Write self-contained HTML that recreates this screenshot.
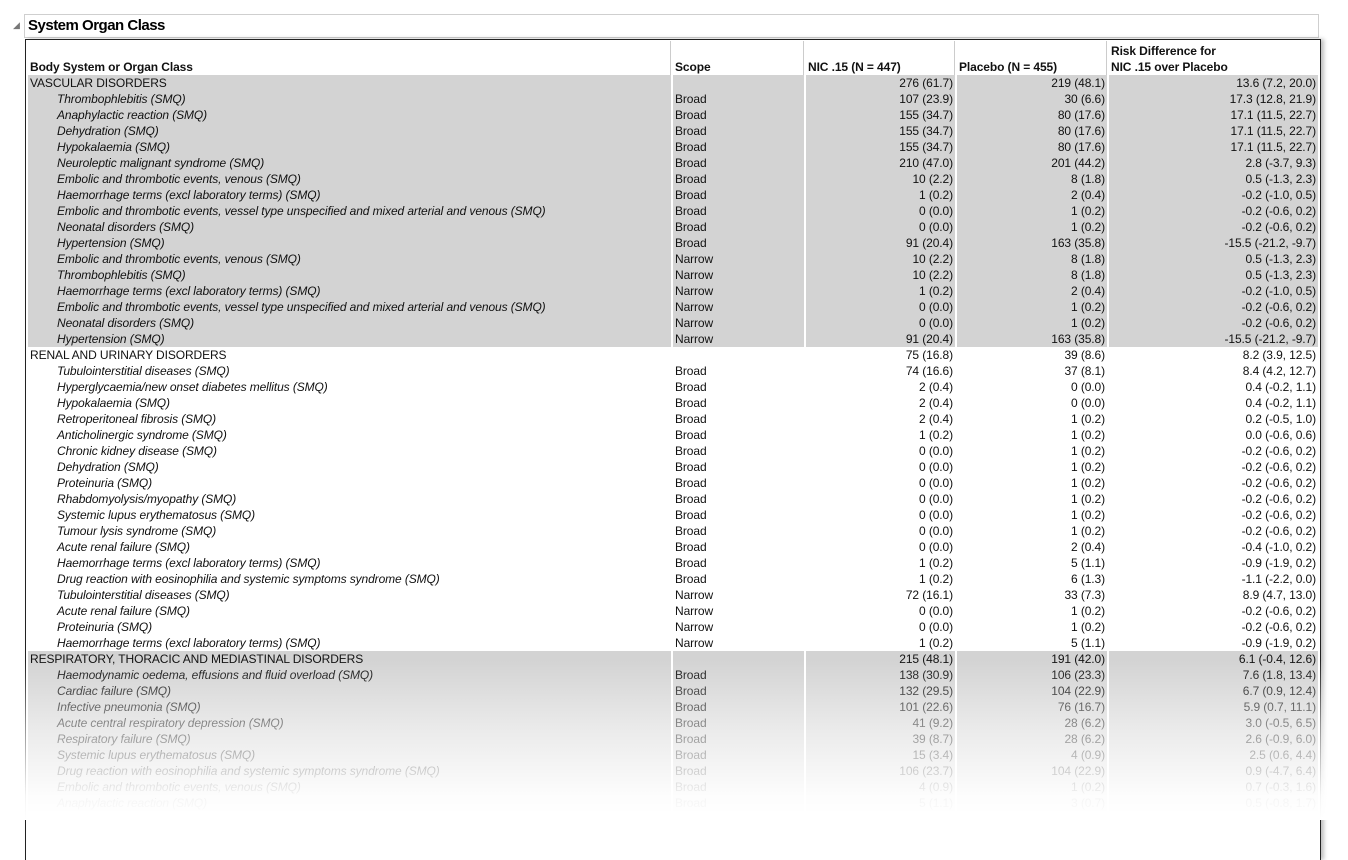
<!DOCTYPE html>
<html><head><style>
body{margin:0;width:1348px;height:808px;background:#fff;overflow:hidden;position:relative;font-family:"Liberation Sans",sans-serif;}
#title{position:absolute;left:24px;top:14px;width:1293px;height:22px;border:1px solid #cfcfcf;background:#fff;}
#title span{position:absolute;left:3px;top:2px;font-weight:bold;font-size:15px;letter-spacing:-0.5px;color:#000;}
#tri{position:absolute;left:13px;top:20px;font-size:9px;color:#777;}
#frame{position:absolute;left:25px;top:39px;width:1294px;height:820px;border:1px solid #222;border-bottom:none;background:#fff;box-shadow:3px 0 4px rgba(0,0,0,.25);}
table{position:absolute;left:0;top:1px;border-collapse:separate;border-spacing:2px 0;table-layout:fixed;font-size:12px;letter-spacing:-0.1px;color:#111;}
td,th{height:16px;padding:0 2px;white-space:nowrap;overflow:hidden;line-height:16px;}
th{height:34px;vertical-align:bottom;text-align:left;font-weight:bold;line-height:16px;border-right:1px solid #ccc;}
th:last-child{border-right:none}
td.n{text-align:right;}
td.i{font-style:italic;padding-left:29px;}
tr.g td{background:#d3d3d3;}
tr.w td{background:#fff;}
#fade{position:absolute;left:0;top:660px;width:1348px;height:160px;background:linear-gradient(to bottom,rgba(255,255,255,0) 0%,rgba(255,255,255,0.5) 40%,rgba(255,255,255,0.95) 85%,#fff 100%);}
</style></head><body>
<div id="tri">&#9698;</div>
<div id="title"><span>System Organ Class</span></div>
<div id="frame">
<table>
<colgroup><col style="width:643px"><col style="width:131px"><col style="width:149px"><col style="width:150px"><col style="width:209px"></colgroup>
<tr><th>Body System or Organ Class</th><th>Scope</th><th>NIC .15 (N = 447)</th><th>Placebo (N = 455)</th><th>Risk Difference for<br>NIC .15 over Placebo</th></tr>
<tr class="g"><td>VASCULAR DISORDERS</td><td></td><td class="n">276 (61.7)</td><td class="n">219 (48.1)</td><td class="n">13.6 (7.2, 20.0)</td></tr>
<tr class="g"><td class="i">Thrombophlebitis (SMQ)</td><td>Broad</td><td class="n">107 (23.9)</td><td class="n">30 (6.6)</td><td class="n">17.3 (12.8, 21.9)</td></tr>
<tr class="g"><td class="i">Anaphylactic reaction (SMQ)</td><td>Broad</td><td class="n">155 (34.7)</td><td class="n">80 (17.6)</td><td class="n">17.1 (11.5, 22.7)</td></tr>
<tr class="g"><td class="i">Dehydration (SMQ)</td><td>Broad</td><td class="n">155 (34.7)</td><td class="n">80 (17.6)</td><td class="n">17.1 (11.5, 22.7)</td></tr>
<tr class="g"><td class="i">Hypokalaemia (SMQ)</td><td>Broad</td><td class="n">155 (34.7)</td><td class="n">80 (17.6)</td><td class="n">17.1 (11.5, 22.7)</td></tr>
<tr class="g"><td class="i">Neuroleptic malignant syndrome (SMQ)</td><td>Broad</td><td class="n">210 (47.0)</td><td class="n">201 (44.2)</td><td class="n">2.8 (-3.7, 9.3)</td></tr>
<tr class="g"><td class="i">Embolic and thrombotic events, venous (SMQ)</td><td>Broad</td><td class="n">10 (2.2)</td><td class="n">8 (1.8)</td><td class="n">0.5 (-1.3, 2.3)</td></tr>
<tr class="g"><td class="i">Haemorrhage terms (excl laboratory terms) (SMQ)</td><td>Broad</td><td class="n">1 (0.2)</td><td class="n">2 (0.4)</td><td class="n">-0.2 (-1.0, 0.5)</td></tr>
<tr class="g"><td class="i">Embolic and thrombotic events, vessel type unspecified and mixed arterial and venous (SMQ)</td><td>Broad</td><td class="n">0 (0.0)</td><td class="n">1 (0.2)</td><td class="n">-0.2 (-0.6, 0.2)</td></tr>
<tr class="g"><td class="i">Neonatal disorders (SMQ)</td><td>Broad</td><td class="n">0 (0.0)</td><td class="n">1 (0.2)</td><td class="n">-0.2 (-0.6, 0.2)</td></tr>
<tr class="g"><td class="i">Hypertension (SMQ)</td><td>Broad</td><td class="n">91 (20.4)</td><td class="n">163 (35.8)</td><td class="n">-15.5 (-21.2, -9.7)</td></tr>
<tr class="g"><td class="i">Embolic and thrombotic events, venous (SMQ)</td><td>Narrow</td><td class="n">10 (2.2)</td><td class="n">8 (1.8)</td><td class="n">0.5 (-1.3, 2.3)</td></tr>
<tr class="g"><td class="i">Thrombophlebitis (SMQ)</td><td>Narrow</td><td class="n">10 (2.2)</td><td class="n">8 (1.8)</td><td class="n">0.5 (-1.3, 2.3)</td></tr>
<tr class="g"><td class="i">Haemorrhage terms (excl laboratory terms) (SMQ)</td><td>Narrow</td><td class="n">1 (0.2)</td><td class="n">2 (0.4)</td><td class="n">-0.2 (-1.0, 0.5)</td></tr>
<tr class="g"><td class="i">Embolic and thrombotic events, vessel type unspecified and mixed arterial and venous (SMQ)</td><td>Narrow</td><td class="n">0 (0.0)</td><td class="n">1 (0.2)</td><td class="n">-0.2 (-0.6, 0.2)</td></tr>
<tr class="g"><td class="i">Neonatal disorders (SMQ)</td><td>Narrow</td><td class="n">0 (0.0)</td><td class="n">1 (0.2)</td><td class="n">-0.2 (-0.6, 0.2)</td></tr>
<tr class="g"><td class="i">Hypertension (SMQ)</td><td>Narrow</td><td class="n">91 (20.4)</td><td class="n">163 (35.8)</td><td class="n">-15.5 (-21.2, -9.7)</td></tr>
<tr class="w"><td>RENAL AND URINARY DISORDERS</td><td></td><td class="n">75 (16.8)</td><td class="n">39 (8.6)</td><td class="n">8.2 (3.9, 12.5)</td></tr>
<tr class="w"><td class="i">Tubulointerstitial diseases (SMQ)</td><td>Broad</td><td class="n">74 (16.6)</td><td class="n">37 (8.1)</td><td class="n">8.4 (4.2, 12.7)</td></tr>
<tr class="w"><td class="i">Hyperglycaemia/new onset diabetes mellitus (SMQ)</td><td>Broad</td><td class="n">2 (0.4)</td><td class="n">0 (0.0)</td><td class="n">0.4 (-0.2, 1.1)</td></tr>
<tr class="w"><td class="i">Hypokalaemia (SMQ)</td><td>Broad</td><td class="n">2 (0.4)</td><td class="n">0 (0.0)</td><td class="n">0.4 (-0.2, 1.1)</td></tr>
<tr class="w"><td class="i">Retroperitoneal fibrosis (SMQ)</td><td>Broad</td><td class="n">2 (0.4)</td><td class="n">1 (0.2)</td><td class="n">0.2 (-0.5, 1.0)</td></tr>
<tr class="w"><td class="i">Anticholinergic syndrome (SMQ)</td><td>Broad</td><td class="n">1 (0.2)</td><td class="n">1 (0.2)</td><td class="n">0.0 (-0.6, 0.6)</td></tr>
<tr class="w"><td class="i">Chronic kidney disease (SMQ)</td><td>Broad</td><td class="n">0 (0.0)</td><td class="n">1 (0.2)</td><td class="n">-0.2 (-0.6, 0.2)</td></tr>
<tr class="w"><td class="i">Dehydration (SMQ)</td><td>Broad</td><td class="n">0 (0.0)</td><td class="n">1 (0.2)</td><td class="n">-0.2 (-0.6, 0.2)</td></tr>
<tr class="w"><td class="i">Proteinuria (SMQ)</td><td>Broad</td><td class="n">0 (0.0)</td><td class="n">1 (0.2)</td><td class="n">-0.2 (-0.6, 0.2)</td></tr>
<tr class="w"><td class="i">Rhabdomyolysis/myopathy (SMQ)</td><td>Broad</td><td class="n">0 (0.0)</td><td class="n">1 (0.2)</td><td class="n">-0.2 (-0.6, 0.2)</td></tr>
<tr class="w"><td class="i">Systemic lupus erythematosus (SMQ)</td><td>Broad</td><td class="n">0 (0.0)</td><td class="n">1 (0.2)</td><td class="n">-0.2 (-0.6, 0.2)</td></tr>
<tr class="w"><td class="i">Tumour lysis syndrome (SMQ)</td><td>Broad</td><td class="n">0 (0.0)</td><td class="n">1 (0.2)</td><td class="n">-0.2 (-0.6, 0.2)</td></tr>
<tr class="w"><td class="i">Acute renal failure (SMQ)</td><td>Broad</td><td class="n">0 (0.0)</td><td class="n">2 (0.4)</td><td class="n">-0.4 (-1.0, 0.2)</td></tr>
<tr class="w"><td class="i">Haemorrhage terms (excl laboratory terms) (SMQ)</td><td>Broad</td><td class="n">1 (0.2)</td><td class="n">5 (1.1)</td><td class="n">-0.9 (-1.9, 0.2)</td></tr>
<tr class="w"><td class="i">Drug reaction with eosinophilia and systemic symptoms syndrome (SMQ)</td><td>Broad</td><td class="n">1 (0.2)</td><td class="n">6 (1.3)</td><td class="n">-1.1 (-2.2, 0.0)</td></tr>
<tr class="w"><td class="i">Tubulointerstitial diseases (SMQ)</td><td>Narrow</td><td class="n">72 (16.1)</td><td class="n">33 (7.3)</td><td class="n">8.9 (4.7, 13.0)</td></tr>
<tr class="w"><td class="i">Acute renal failure (SMQ)</td><td>Narrow</td><td class="n">0 (0.0)</td><td class="n">1 (0.2)</td><td class="n">-0.2 (-0.6, 0.2)</td></tr>
<tr class="w"><td class="i">Proteinuria (SMQ)</td><td>Narrow</td><td class="n">0 (0.0)</td><td class="n">1 (0.2)</td><td class="n">-0.2 (-0.6, 0.2)</td></tr>
<tr class="w"><td class="i">Haemorrhage terms (excl laboratory terms) (SMQ)</td><td>Narrow</td><td class="n">1 (0.2)</td><td class="n">5 (1.1)</td><td class="n">-0.9 (-1.9, 0.2)</td></tr>
<tr class="g"><td>RESPIRATORY, THORACIC AND MEDIASTINAL DISORDERS</td><td></td><td class="n">215 (48.1)</td><td class="n">191 (42.0)</td><td class="n">6.1 (-0.4, 12.6)</td></tr>
<tr class="g"><td class="i">Haemodynamic oedema, effusions and fluid overload (SMQ)</td><td>Broad</td><td class="n">138 (30.9)</td><td class="n">106 (23.3)</td><td class="n">7.6 (1.8, 13.4)</td></tr>
<tr class="g"><td class="i">Cardiac failure (SMQ)</td><td>Broad</td><td class="n">132 (29.5)</td><td class="n">104 (22.9)</td><td class="n">6.7 (0.9, 12.4)</td></tr>
<tr class="g"><td class="i">Infective pneumonia (SMQ)</td><td>Broad</td><td class="n">101 (22.6)</td><td class="n">76 (16.7)</td><td class="n">5.9 (0.7, 11.1)</td></tr>
<tr class="g"><td class="i">Acute central respiratory depression (SMQ)</td><td>Broad</td><td class="n">41 (9.2)</td><td class="n">28 (6.2)</td><td class="n">3.0 (-0.5, 6.5)</td></tr>
<tr class="g"><td class="i">Respiratory failure (SMQ)</td><td>Broad</td><td class="n">39 (8.7)</td><td class="n">28 (6.2)</td><td class="n">2.6 (-0.9, 6.0)</td></tr>
<tr class="g"><td class="i">Systemic lupus erythematosus (SMQ)</td><td>Broad</td><td class="n">15 (3.4)</td><td class="n">4 (0.9)</td><td class="n">2.5 (0.6, 4.4)</td></tr>
<tr class="g"><td class="i">Drug reaction with eosinophilia and systemic symptoms syndrome (SMQ)</td><td>Broad</td><td class="n">106 (23.7)</td><td class="n">104 (22.9)</td><td class="n">0.9 (-4.7, 6.4)</td></tr>
<tr class="g"><td class="i">Embolic and thrombotic events, venous (SMQ)</td><td>Broad</td><td class="n">4 (0.9)</td><td class="n">1 (0.2)</td><td class="n">0.7 (-0.3, 1.6)</td></tr>
<tr class="g"><td class="i">Anaphylactic reaction (SMQ)</td><td>Broad</td><td class="n">5 (1.1)</td><td class="n">3 (0.7)</td><td class="n">0.5 (-0.8, 1.7)</td></tr>
</table>
</div>
<div id="fade"></div>
</body></html>
